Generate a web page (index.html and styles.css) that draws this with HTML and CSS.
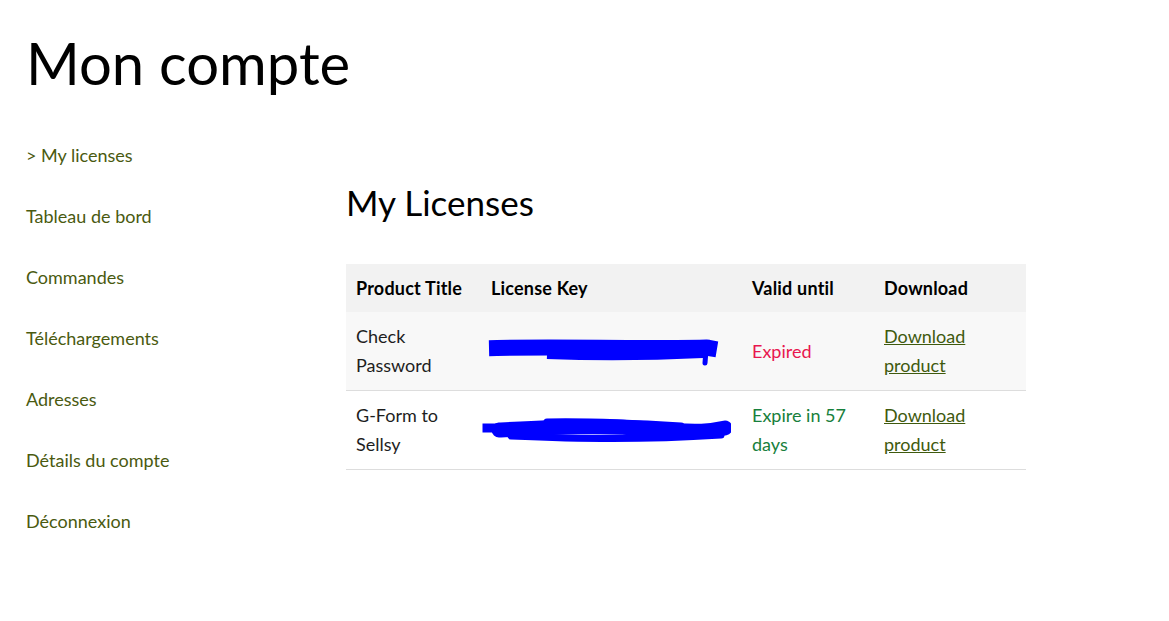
FILE: index.html
```html
<!DOCTYPE html>
<html lang="fr">
<head>
<meta charset="utf-8">
<title>Mon compte</title>
<link rel="stylesheet" href="styles.css">
</head>
<body>
<div class="page">
  <h1 class="page-title">Mon compte</h1>
  <div class="account">
    <nav class="account-nav">
      <ul>
        <li><a href="#">&gt; My licenses</a></li>
        <li><a href="#">Tableau de bord</a></li>
        <li><a href="#">Commandes</a></li>
        <li><a href="#">Téléchargements</a></li>
        <li><a href="#">Adresses</a></li>
        <li><a href="#">Détails du compte</a></li>
        <li><a href="#">Déconnexion</a></li>
      </ul>
    </nav>
    <main class="account-content">
      <h2 class="section-title">My Licenses</h2>
      <table class="licenses">
        <thead>
          <tr>
            <th class="c-title">Product Title</th>
            <th class="c-key">License Key</th>
            <th class="c-valid">Valid until</th>
            <th class="c-dl">Download</th>
          </tr>
        </thead>
        <tbody>
          <tr class="odd">
            <td>Check Password</td>
            <td class="key">
              <svg class="redact" width="250" height="30" viewBox="0 0 250 30">
                <path d="M16 12 C60 11 120 12 180 12 S222 11 228 12" stroke="#0000ff" stroke-width="16" fill="none" stroke-linecap="square"/>
                <path d="M66 19 C120 21 180 20 222 18" stroke="#0000ff" stroke-width="8" fill="none" stroke-linecap="butt"/>
                <path d="M225 14 L224 27" stroke="#0000ff" stroke-width="5" fill="none" stroke-linecap="round"/>
              </svg>
            </td>
            <td class="expired">Expired</td>
            <td><a href="#">Download product</a></td>
          </tr>
          <tr>
            <td>G-Form to Sellsy</td>
            <td class="key">
              <svg class="redact" width="250" height="30" viewBox="0 0 250 30">
                <path d="M6 13 L20 13" stroke="#0000ff" stroke-width="9" fill="none" stroke-linecap="square"/>
                <path d="M18 15 C80 12 120 10 170 14 S230 16 244 13" stroke="#0000ff" stroke-width="15" fill="none" stroke-linecap="round"/>
                <path d="M66 7 C110 6 150 8 200 11" stroke="#0000ff" stroke-width="7" fill="none" stroke-linecap="round"/>
                <path d="M30 21 C100 24 160 25 240 20" stroke="#0000ff" stroke-width="7" fill="none" stroke-linecap="round"/>
              </svg>
            </td>
            <td class="active">Expire in 57 days</td>
            <td><a href="#">Download product</a></td>
          </tr>
        </tbody>
      </table>
    </main>
  </div>
</div>
</body>
</html>
```
FILE: styles.css
```css
html, body {
  margin: 0;
  padding: 0;
  background: #ffffff;
}
body {
  font-family: "Lato", "Open Sans", sans-serif;
  color: #1e1e1e;
}
.page {
  padding: 0 26px;
}
.page-title {
  margin: 0;
  padding-top: 26px;
  font-size: 58px;
  font-weight: 400;
  line-height: 74px;
  color: #000000;
}
.account {
  display: flex;
  margin-top: 41px;
}
.account-nav {
  width: 320px;
  flex: none;
}
.account-nav ul {
  list-style: none;
  margin: 0;
  padding: 0;
  display: flex;
  flex-direction: column;
}
.account-nav li {
  height: 61px;
  line-height: 29px;
  font-size: 18px;
}
.account-nav a {
  color: #4a5a10;
  text-decoration: none;
}
.account-content {
  flex: 1;
  padding-top: 39px;
}
.section-title {
  margin: 0;
  font-size: 35px;
  font-weight: 400;
  line-height: 44px;
  color: #000000;
}
.licenses {
  margin-top: 40px;
  width: 680px;
  border-collapse: collapse;
  font-size: 18px;
}
.licenses th {
  background: #f2f2f2;
  text-align: left;
  font-weight: 700;
  color: #000;
  padding: 10px;
  line-height: 28px;
  letter-spacing: 0.2px;
}
.licenses td {
  padding: 10px;
  line-height: 29px;
  vertical-align: middle;
  border-bottom: 1px solid #dddddd;
}
.licenses tr.odd td {
  background: #f8f8f8;
}
.c-title { width: 115px; }
.c-key { width: 241px; }
.c-valid { width: 112px; }
.c-dl { width: 132px; }
.redact {
  display: block;
  margin-left: -10px;
}
.expired { color: #e8174f; }
.active { color: #17803c; }
.licenses a {
  color: #3f5a0e;
  text-decoration: underline;
}
```
